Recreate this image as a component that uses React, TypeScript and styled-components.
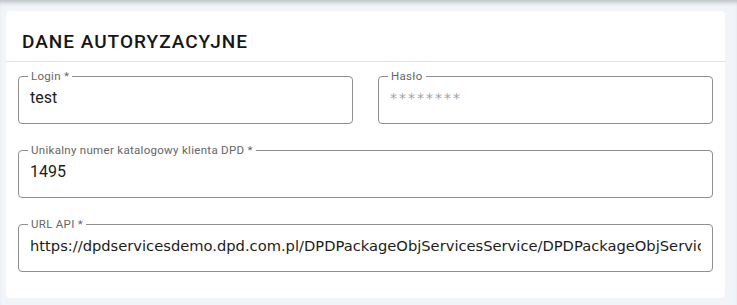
import React from 'react';
import styled, { createGlobalStyle } from 'styled-components';

const Global = createGlobalStyle`
  html, body { margin: 0; padding: 0; }
  body {
    background: #f1f5f9;
    font-family: Roboto, "Liberation Sans", sans-serif;
    color: #1c1c1c;
  }
`;

// page with the shadow of the app bar above it
const Page = styled.div`
  min-height: 305px;
  box-sizing: border-box;
  padding: 11px 12px 7px 6px;
  box-shadow: inset 0 5px 5px -3px rgba(0, 0, 0, 0.25);
`;

const Card = styled.section`
  background: #fff;
  border-radius: 4px;
`;

const CardHeader = styled.header`
  height: 51px;
  box-sizing: border-box;
  display: flex;
  align-items: center;
  padding: 10px 16px 0;
  border-bottom: 1px solid #e2e2e2;
`;

const Title = styled.h2`
  margin: 0;
  font-size: 19px;
  font-weight: 500;
  letter-spacing: 1px;
  color: #161616;
  text-transform: uppercase;
`;

const Body = styled.div`
  display: flex;
  flex-direction: column;
  gap: 20px;
  padding: 8px 12px 26px;
`;

const Row = styled.div`
  display: grid;
  grid-template-columns: 1fr 1fr;
  gap: 25px;
`;

const Field = styled.fieldset`
  margin: 0;
  min-width: 0;
  padding: 0 11px;
  border: 1px solid #8e8e8e;
  border-radius: 4px;
`;

const Label = styled.legend`
  margin-left: -2px;
  padding: 0 3px;
  font-size: 11.5px;
  letter-spacing: 0.3px;
  line-height: 12px;
  color: #666;
`;

const Value = styled.div<{ $mono?: boolean }>`
  padding: 6px 0 15px;
  line-height: 20px;
  font-size: ${(p) => (p.$mono ? '14.7px' : '16px')};
  font-family: ${(p) => (p.$mono ? '"DejaVu Sans", Verdana, sans-serif' : 'Roboto, "Liberation Sans", sans-serif')};
  color: #1c1c1c;
  white-space: nowrap;
  overflow: hidden;
`;

const Masked = styled(Value)`
  font-family: "DejaVu Sans", Verdana, sans-serif;
  font-size: 14px;
  letter-spacing: 2px;
  color: #a3a3a3;
`;

type InputProps = { label: string; value: string; mono?: boolean; secret?: boolean };

const Input = ({ label, value, mono, secret }: InputProps) => (
  <Field>
    <Label>{label}</Label>
    {secret ? <Masked>{value}</Masked> : <Value $mono={mono}>{value}</Value>}
  </Field>
);

export default function App() {
  return (
    <>
      <Global />
      <Page>
        <Card>
          <CardHeader>
            <Title>Dane autoryzacyjne</Title>
          </CardHeader>
          <Body>
            <Row>
              <Input label="Login *" value="test" />
              <Input label="Hasło" value="********" secret />
            </Row>
            <Input label="Unikalny numer katalogowy klienta DPD *" value="1495" />
            <Input
              label="URL API *"
              value="https://dpdservicesdemo.dpd.com.pl/DPDPackageObjServicesService/DPDPackageObjServices?WSDL"
              mono
            />
          </Body>
        </Card>
      </Page>
    </>
  );
}
